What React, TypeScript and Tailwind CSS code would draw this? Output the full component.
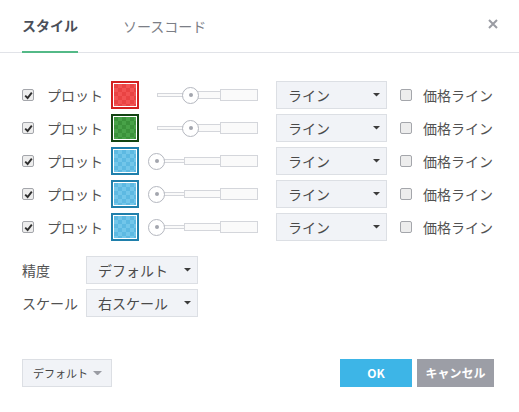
import React from "react";

type Plot = {
  border: string;
  a: string;
  b: string;
  value: number;
};

const plots: Plot[] = [
  { border: "#d21f1f", a: "#f25252", b: "#e94343", value: 34 },
  { border: "#124412", a: "#48a248", b: "#3b923b", value: 34 },
  { border: "#1f7fab", a: "#72c6ea", b: "#5db9e2", value: 0 },
  { border: "#1f7fab", a: "#72c6ea", b: "#5db9e2", value: 0 },
  { border: "#1f7fab", a: "#72c6ea", b: "#5db9e2", value: 0 },
];

const font = "font-['Noto_Sans_CJK_JP','Noto_Sans',sans-serif]";

function Check({ checked }: { checked: boolean }) {
  return (
    <span className="flex h-[12px] w-[12px] items-center justify-center rounded-[2px] border border-[#a4a6ab] bg-[#ededed]">
      {checked && (
        <svg width="9" height="9" viewBox="0 0 9 9">
          <path d="M1.2 4.6 L3.6 7 L7.8 1.6" fill="none" stroke="#2f2f2f" strokeWidth="1.9" />
        </svg>
      )}
    </span>
  );
}

function Caret({ color = "#3c3c3c", w = 8 }: { color?: string; w?: number }) {
  return (
    <svg width={w} height={w / 2} viewBox="0 0 8 4">
      <path d="M0 0 H8 L4 4 Z" fill={color} />
    </svg>
  );
}

function Swatch({ p, id }: { p: Plot; id: string }) {
  return (
    <div className="h-[28px] w-[28px] border-2 bg-white p-px" style={{ borderColor: p.border }}>
      <svg width="22" height="22" className="block">
        <defs>
          <pattern id={id} width="8" height="8" patternUnits="userSpaceOnUse">
            <rect width="8" height="8" fill={p.a} />
            <rect width="4" height="4" fill={p.b} />
            <rect x="4" y="4" width="4" height="4" fill={p.b} />
          </pattern>
        </defs>
        <rect width="22" height="22" fill={`url(#${id})`} />
      </svg>
    </div>
  );
}

function Slider({ value }: { value: number }) {
  return (
    <div className="relative ml-[18px] flex h-[17px] w-[101px] items-center">
      <div className="h-[4px] w-[28px] border border-[#d4d6db] bg-[#fafafa]" />
      <div className="-ml-px h-[8px] w-[37px] border border-[#d4d6db] bg-[#fafafa]" />
      <div className="-ml-px h-[12px] w-[38px] border border-[#d4d6db] bg-[#fafafa]" />
      <div
        className="absolute top-0 flex h-[17px] w-[17px] items-center justify-center rounded-full border border-[#b4b7bf] bg-white"
        style={{ left: value - 9 }}
      >
        <span className="h-[4px] w-[4px] rounded-full bg-[#a3a6ae]" />
      </div>
    </div>
  );
}

function Select({ label, w, cls = "" }: { label: string; w: string; cls?: string }) {
  return (
    <div
      className={`flex h-[28px] items-center justify-between border border-[#dcdfe4] bg-[#f1f3f7] pl-[11px] pr-[6px] text-[14px] text-[#4a4a4a] ${w} ${cls}`}
    >
      <span>{label}</span>
      <Caret w={7} />
    </div>
  );
}

export default function App() {
  return (
    <div className={`h-[412px] w-[519px] bg-white text-[#525252] ${font}`}>
      <div className="flex h-[53px] items-stretch border-b border-[#e1e3e8] pl-[22px] pr-[21px]">
        <div className="-mb-px flex items-center border-b-2 border-[#53b987] text-[14px] font-bold text-[#4b4f59]">
          スタイル
        </div>
        <div className="ml-[45px] flex items-center text-[14px] text-[#7b7e86]">ソースコード</div>
        <div className="ml-auto flex items-center pb-[4px]">
          <svg width="10" height="10" viewBox="0 0 10 10">
            <path d="M1 1 L9 9 M9 1 L1 9" stroke="#9a9ca3" strokeWidth="2" />
          </svg>
        </div>
      </div>

      <div className="flex flex-col gap-[5px] pl-[22px] pt-[28px]">
        {plots.map((p, i) => (
          <div key={i} className="flex h-[28px] items-center text-[14px]">
            <Check checked />
            <span className="ml-[13px] w-[56px]">プロット</span>
            <span className="ml-[8px]">
              <Swatch p={p} id={`chk${i}`} />
            </span>
            <Slider value={p.value} />
            <Select label="ライン" w="w-[111px]" cls="ml-[18px]" />
            <span className="ml-[13px]">
              <Check checked={false} />
            </span>
            <span className="ml-[11px]">価格ライン</span>
          </div>
        ))}
      </div>

      <div className="mt-[15px] flex flex-col gap-[5px] pl-[22px] text-[14px]">
        <div className="flex h-[28px] items-center">
          <span className="w-[64px]">精度</span>
          <Select label="デフォルト" w="w-[112px]" />
        </div>
        <div className="flex h-[28px] items-center">
          <span className="w-[64px]">スケール</span>
          <Select label="右スケール" w="w-[112px]" />
        </div>
      </div>

      <div className="mt-[42px] flex items-center pl-[22px] pr-[25px]">
        <div className="flex h-[28px] w-[90px] items-center justify-between border border-[#dcdfe4] bg-[#f1f3f7] pl-[10px] pr-[9px] text-[11px] text-[#444]">
          <span>デフォルト</span>
          <Caret color="#9a9ca3" w={9} />
        </div>
        <div className="ml-auto flex h-[28px] w-[72px] items-center justify-center bg-[#3db5e7] text-[12px] font-bold text-white">
          OK
        </div>
        <div className="ml-[5px] flex h-[28px] w-[77px] items-center justify-center bg-[#9c9ea6] text-[12px] font-bold text-white">
          キャンセル
        </div>
      </div>
    </div>
  );
}
